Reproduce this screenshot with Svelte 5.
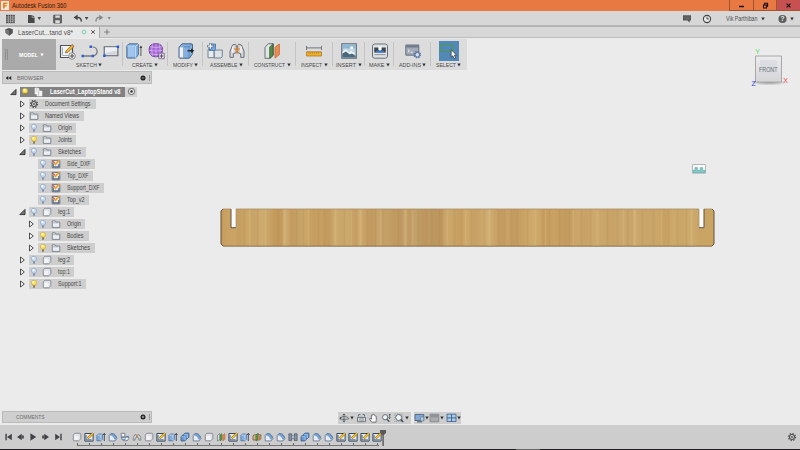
<script>
  const groups = [
    { name: 'SKETCH', w: 67, tw: 21, icons: ['sketchBig', 'line', 'rect'] },
    { name: 'CREATE', w: 45.5, tw: 20.5, icons: ['extrudeBig', 'form'] },
    { name: 'MODIFY', w: 35, tw: 20, icons: ['press'] },
    { name: 'ASSEMBLE', w: 46, tw: 27.5, icons: ['newcomp', 'jointBig'] },
    { name: 'CONSTRUCT', w: 46.5, tw: 31, icons: ['planesBig'] },
    { name: 'INSPECT', w: 37.5, tw: 21, icons: ['measure'] },
    { name: 'INSERT', w: 32, tw: 20, icons: ['photo'] },
    { name: 'MAKE', w: 29, tw: 15.5, icons: ['printer'] },
    { name: 'ADD-INS', w: 37, tw: 22, icons: ['addins'] },
    { name: 'SELECT', w: 35, tw: 20, icons: ['select'] }
  ];

  // d: nesting depth, a: arrow state, w: highlighted width, tw: text width
  const tree = [
    { t: 'Document Settings', d: 1, a: 'closed', icons: ['gear'], w: 67, tw: 45.5 },
    { t: 'Named Views', d: 1, a: 'closed', icons: ['folder'], w: 55, tw: 34 },
    { t: 'Origin', d: 1, a: 'closed', icons: ['bulb', 'folder'], w: 47, tw: 14 },
    { t: 'Joints', d: 1, a: 'closed', icons: ['bulbOn', 'folder'], w: 47, tw: 14 },
    { t: 'Sketches', d: 1, a: 'open', icons: ['bulb', 'folder'], w: 57, tw: 23 },
    { t: 'Side_DXF', d: 2, a: '', icons: ['bulb', 'dxf'], w: 57, tw: 23.5 },
    { t: 'Top_DXF', d: 2, a: '', icons: ['bulb', 'dxf'], w: 55, tw: 21.5 },
    { t: 'Support_DXF', d: 2, a: '', icons: ['bulb', 'dxf'], w: 65.5, tw: 32.5 },
    { t: 'Top_v2', d: 2, a: '', icons: ['bulb', 'dxf'], w: 51, tw: 17.5 },
    { t: 'leg:1', d: 1, a: 'open', icons: ['bulb', 'box'], w: 45, tw: 12 },
    { t: 'Origin', d: 2, a: 'closed', icons: ['bulb', 'folder'], w: 47, tw: 14 },
    { t: 'Bodies', d: 2, a: 'closed', icons: ['bulbOn', 'folder'], w: 51, tw: 16.5 },
    { t: 'Sketches', d: 2, a: 'closed', icons: ['bulbOn', 'folder'], w: 57, tw: 23 },
    { t: 'leg:2', d: 1, a: 'closed', icons: ['bulb', 'box'], w: 45, tw: 12 },
    { t: 'top:1', d: 1, a: 'closed', icons: ['bulb', 'box'], w: 45, tw: 12 },
    { t: 'Support:1', d: 1, a: 'closed', icons: ['bulbOn', 'box'], w: 57, tw: 23.5 }
  ];

  const history = [
    'box', 'sketch', 'extrude', 'fillet', 'revolve', 'joint', 'box', 'sketch', 'extrude',
    'combine', 'fillet', 'box', 'planes', 'sketch', 'extrude', 'split', 'fillet', 'fillet',
    'mirror', 'combine', 'fillet', 'fillet', 'sketch', 'sketch', 'sketch', 'sketch'
  ];

  // [offset along the board, colour]
  const grain = [
    [0, '#c59a5c'], [5, '#c9a163'], [14, '#cba466'], [17, '#c49d60'], [26, '#cba767'], [34, '#c9a469'],
    [41, '#ceab6f'], [48, '#c8a467'], [54, '#c49a5b'], [61, '#c39a5d'], [63, '#cdac72'], [67, '#cba66c'],
    [70, '#c39b60'], [78, '#c7a265'], [85, '#cba76a'], [92, '#c69e60'], [100, '#c89f63'], [108, '#c39a5d'],
    [114, '#cdab70'], [120, '#c8a568'], [127, '#cba86c'], [135, '#c49d62'], [139, '#cfad73'], [144, '#c6a064'],
    [151, '#c29960'], [158, '#c7a46b'], [166, '#c4a067'], [173, '#c19a61'], [181, '#bd9863'], [184, '#c8a970'],
    [188, '#bf9961'], [194, '#c2a16a'], [202, '#bd975f'], [208, '#c09861'], [214, '#bb965f'], [221, '#be965d'],
    [224, '#c9a66c'], [230, '#caa66a'], [238, '#c79f61'], [246, '#cda86a'], [254, '#c6a065'], [260, '#cba56a'],
    [268, '#d0ae75'], [274, '#c9a468'], [280, '#c49b5f'], [287, '#c8a267'], [293, '#c39a60'], [302, '#c9a265'],
    [312, '#cfaa6d'], [319, '#cba668'], [322, '#c59b5d'], [333, '#c8a163'], [345, '#c39a5e'], [356, '#cba56a'],
    [365, '#c8a266'], [374, '#cda96d'], [383, '#caa56a'], [392, '#c8a266'], [400, '#cba76d'], [412, '#c9a46b'],
    [413, '#d1af75'], [416, '#cba76b'], [426, '#c9a56a'], [436, '#cba569'], [444, '#c6a163'], [452, '#cda96c'],
    [461, '#c9a668'], [470, '#ceac6f'], [478, '#c8a466'], [486, '#c9a463'], [493, '#c9a463']
  ];
  const darkLines = [24, 37, 58, 76, 83, 98, 104, 124, 147, 155, 163, 178, 198, 206, 211, 219, 234, 241, 251, 264, 278, 284, 291, 297, 307, 329, 339, 349, 361, 370, 387, 397, 407, 422, 433, 448, 457, 466];
  const lightLines = [29, 45, 64, 88, 115, 131, 140, 160, 185, 192, 227, 245, 269, 315, 325, 353, 377, 403, 414, 441, 471];
</script>

{#snippet label(text, w, size = 6, color = '#555', weight = 400)}
  <svg class="label" width={w} height="8" viewBox="0 0 {w} 8">
    <text x="0" y={4 + size * 0.36} textLength={w} lengthAdjust="spacingAndGlyphs" font-size={size} fill={color} font-weight={weight}>{text}</text>
  </svg>
{/snippet}

{#snippet caret(color = '#333')}
  <svg class="label" width="4" height="4" viewBox="0 0 4 4"><path d="M.3 .6h3.4L2 3.4z" fill={color} /></svg>
{/snippet}

{#snippet arrow(kind)}
  <svg class="label" width="7" height="8" viewBox="0 0 7 8">
    {#if kind === 'closed'}
      <path d="M1.5 1v6M1.6 1l3.7 3-3.7 3" fill="#f4f4f4" stroke="#3c3c3c" stroke-width=".9" />
    {:else if kind === 'open'}
      <path d="M6 1.4v5.2H.8z" fill="#777" stroke="#2e2e2e" stroke-width=".9" />
    {/if}
  </svg>
{/snippet}

{#snippet small(name)}
  <svg class="small" width="10" height="10" viewBox="0 0 10 10">
    {#if name === 'bulb' || name === 'bulbOn'}
      <circle cx="5" cy="3.8" r="2.6" fill={name === 'bulb' ? '#cbdcf6' : '#ffe15a'} stroke={name === 'bulb' ? '#8aa3cd' : '#d0a838'} stroke-width=".7" />
      <path d="M4 6.3h2v2.5H4z" fill={name === 'bulb' ? '#8295b4' : '#8f8250'} />
      <circle cx="4.4" cy="3.1" r="1" fill="#fff" />
    {:else if name === 'folder'}
      <path d="M1.3 8.4V1.9h3l.7 1.2h3.8v5.3z" fill="#eceef1" stroke="#667080" stroke-width=".8" />
      <path d="M1.6 3.8h6.9" stroke="#98a0aa" stroke-width=".7" />
    {:else if name === 'gear'}
      <circle cx="5" cy="5" r="3.5" fill="none" stroke="#505050" stroke-width="1.3" stroke-dasharray="1.35 1.4" />
      <circle cx="5" cy="5" r="2.5" fill="#d3d3d3" stroke="#505050" stroke-width="1.1" />
      <circle cx="5" cy="5" r=".9" fill="#555" />
    {:else if name === 'box'}
      <path d="M1.3 3.2Q1.3 2.6 2 2.2L3 1.3h4.9q.9 0 .9.8v4.6L7.4 8.3Q7 8.8 6.4 8.8H2.2q-.9 0-.9-.8z" fill="#f2f3f6" stroke="#70757e" stroke-width=".8" />
      <path d="M2.2 3h4.5q.5 0 .5.5v4.4M7.2 3l1.2-1.2" fill="none" stroke="#b5bbc5" stroke-width=".5" />
    {:else if name === 'dxf'}
      <path d="M1.2 1.4h7.6v7.4H1.2z" fill="#e9e7df" stroke="#4a5a70" stroke-width=".8" />
      <path d="M2.2 8V4.4M7.8 8V5M2.2 7.9h5.6" fill="none" stroke="#415a7b" stroke-width="1" />
      <path d="M3.8 5.8 8.4 1" stroke="#eda02a" stroke-width="1.8" />
      <path d="M1.4 2l2.4 2.2" stroke="#d8573a" stroke-width="1.2" />
    {:else if name === 'sketch'}
      <path d="M.9 1.5h8.2v7.6H.9z" fill="#e7e9eb" stroke="#34475f" stroke-width="1" />
      <path d="M2 3v4.9h5.8" fill="none" stroke="#4c6484" stroke-width="1" />
      <path d="M3.8 6.3 9 1.2" stroke="#5b4a1e" stroke-width="2.3" />
      <path d="M4 6.1 9 1.2" stroke="#ffc628" stroke-width="1.6" />
    {:else if name === 'extrude'}
      <path d="M.9 3.1l1.5-1h4v5.3L5 8.8H.9z" fill="#84aede" stroke="#3c679c" stroke-width=".7" />
      <path d="M1 3.1h4v5.6M5 3.1l1.4-1" stroke="#d3e5fa" fill="none" stroke-width=".6" />
      <path d="M8.3 9V1.5M7.1 3l1.2-1.7L9.5 3" fill="none" stroke="#39424e" stroke-width=".9" />
    {:else if name === 'fillet'}
      <path d="M1.2 8.9V3.4l1.8-2q4.9-.2 5.9 5L7.1 8.9z" fill="#e8eef6" stroke="#5e6f87" stroke-width=".8" />
      <path d="M2 3Q5.7 3.2 6.9 7.4L8.6 6Q7.4 1.8 3.2 1.6z" fill="#7ba7dd" stroke="#45709f" stroke-width=".5" />
    {:else if name === 'revolve'}
      <path d="M1.2 1.3h3.6v3.5H1.2zM1.2 5.2q.2 3.7 4 3.7 3.5-.2 3.6-2.6V4.7H5.6v1.4z" fill="#f1f2f4" stroke="#606d7e" stroke-width=".8" />
      <path d="M2.2 7q1.3 1.3 3.3.6M6 5h2.7" stroke="#3978be" stroke-width="1" fill="none" />
    {:else if name === 'joint'}
      <path d="M1.2 8.2V5.7L3 2.5l1.7 1v2l-1.6.6v2zM8.8 8.2V5.7L7 2.5l-1.7 1v2l1.6.6v2z" fill="#d8dadc" stroke="#71767c" stroke-width=".8" />
      <path d="M5 2.1v3.4" stroke="#df8c47" stroke-width=".9" />
    {:else if name === 'combine'}
      <path d="M1 4.6 2.4 3.3h1.4V2.1l1.4-1h3.7v4.2L7.4 6.5H6.3v1.1L4.9 8.9H1z" fill="#6998d3" stroke="#2f5788" stroke-width=".8" />
      <path d="M1.4 4.8H5v3.5M4.2 2.4h3.2v3.7" fill="none" stroke="#bcd7f5" stroke-width=".6" />
    {:else if name === 'planes'}
      <path d="M1.5 3.3 3.9 1.5v5.9L1.5 9z" fill="#dcdfe1" stroke="#56616c" stroke-width=".6" />
      <path d="M4 3.2 6 1.6v5.9L4 9z" fill="#5b9a48" stroke="#3b6b2f" stroke-width=".5" />
      <path d="M6.8 3.2 9 1.6v5.7L6.8 9z" fill="#ea8549" stroke="#b86336" stroke-width=".5" />
    {:else if name === 'split'}
      <path d="M1 3.8 2.5 2.7h6.4v4.1L7.5 8H1z" fill="#d7b082" stroke="#735a41" stroke-width=".8" />
      <path d="M4 3.2 6 1.2v6L4 9.1z" fill="#62a151" stroke="#376a2c" stroke-width=".7" />
      <path d="M7.4 3.8V8" stroke="#e0683b" stroke-width="1" />
    {:else if name === 'mirror'}
      <path d="M.9 1.8h2.7v6.8H.9zM6.4 1.8h2.7v6.8H6.4z" fill="#8495ab" stroke="#454f5d" stroke-width=".7" />
      <path d="M3.7 3.5h2.6v3.2H3.7z" fill="#c0c9d5" stroke="#5c6775" stroke-width=".6" />
    {/if}
  </svg>
{/snippet}

{#snippet big(name)}
  <svg class="big" width={name === 'select' ? 20 : 18} height={name === 'select' ? 20 : 18} viewBox={name === 'select' ? '0 0 20 20' : '0 0 18 18'}>
    {#if name === 'sketchBig'}
      <path d="M2.5 3.5h12v12h-12z" fill="#f2f4f6" stroke="#4e535b" stroke-width="1.2" />
      <path d="M4.5 5.5v8h6" fill="none" stroke="#a3adb9" />
      <path d="M7.5 10.8 8 8.9 14.1 2.6l1.9 1.8-6.2 6.2z" fill="#f5b82d" stroke="#6e5220" stroke-width=".7" />
      <path d="M13.6 3.1l1.8 1.8" stroke="#db6e5d" stroke-width="1" />
      <circle cx="14" cy="14" r="3.3" fill="#e3e3e3" stroke="#666" stroke-width=".7" />
      <path d="M14 12v4M12 14h4" stroke="#555" stroke-width="1" />
    {:else if name === 'line'}
      <path d="M2 14h8.5a4.6 4.6 0 0 0 0-9.2" fill="none" stroke="#737980" stroke-width="1.3" transform="translate(2 0)" />
      <path d="M1.5 12.8H4v2.4H1.5zM11.5 12.8H14v2.4h-2.5zM9.5 3.5H12v2.6H9.5z" fill="#2f5fd0" />
    {:else if name === 'rect'}
      <path d="M2.2 4.8h13.7v9H2.2z" fill="#d5d8df" stroke="#5e6672" stroke-width="1.1" />
      <path d="M3 5.5h12v3L3 11z" fill="#edf0f4" />
      <path d="M1.2 12.6h2.4V15H1.2zM14.7 3.6h2.4V6h-2.4z" fill="#2559cf" />
    {:else if name === 'extrudeBig'}
      <path d="M1.8 4.3Q1.8 3.7 2.5 3.2l1.4-1.4h8.5q1 0 1 .9v10.1L11 15.6q-.5.5-1.2.5H2.8q-1 0-1-.9z" fill="#7fb0e5" stroke="#4a6685" stroke-width=".9" />
      <path d="M2.4 4.2h7.4q.8 0 .8.8v10.6M10.6 4.4l2.3-2" fill="none" stroke="#cce2fa" stroke-width=".9" />
      <path d="M3 5h6.5v9.8H3z" fill="#a0c5ed" />
      <path d="M15.9 14V4.7" stroke="#4c4c4c" stroke-width=".9" /><path d="M14.6 6l1.3-2.5L17.2 6z" fill="#333" />
    {:else if name === 'form'}
      <path d="M5 2.3q4-1.4 7.8 0 2.8 1.3 2.8 5.4t-2.8 6.3q-4 1.8-7.8 0-3-2-3-6.2t3-5.5z" fill="#a567d6" stroke="#68418d" stroke-width=".9" />
      <path d="M5.5 2.1q-1.7 6 0 12M9 1.6v13.3M12.4 2.2q1.5 6 0 12M2.9 4.8q6 1.7 12 0M2 8.3q7 1.5 13.5 0M3 11.8q6 1.6 12 0" fill="none" stroke="#e3c5f7" stroke-width=".6" />
      <path d="M11.8 11.2h5.5v5.5h-5.5z" fill="#e5ddec" stroke="#634b75" stroke-width=".7" />
      <path d="M14.5 12.3v3.5M12.8 14h3.5" stroke="#4a3b58" stroke-width=".9" />
    {:else if name === 'press'}
      <path d="M2 5.2l3.1-3.4h9.4q1 0 1 1v9l-3.2 4.4H3q-1 0-1-1z" fill="#85b1df" stroke="#456585" stroke-width="1" />
      <path d="M2.5 5h4v10.7h-4z" fill="#ecf2f8" stroke="#7890aa" stroke-width=".6" />
      <path d="M7 4.8h5v11M12 4.8l3-2.8" fill="none" stroke="#3c78b3" stroke-width=".7" />
      <path d="M10.5 8.8h5" stroke="#222" stroke-width="1.4" /><path d="M14 6.6l3.4 2.2L14 11z" fill="#222" />
    {:else if name === 'newcomp'}
      <path d="M2 7.8 3.3 6.5h4.8v9.2H2z" fill="#e9ecf0" stroke="#667688" stroke-width=".9" />
      <path d="M8.3 9.3l1.2-1.3h6.8v6.4L15 16H8.3z" fill="#dde3ea" stroke="#667688" stroke-width=".9" />
      <path d="M3 3.4 4.3 2h5.2v5.2L8.3 8.5H3z" fill="#72a8e0" stroke="#426f9f" stroke-width=".8" />
      <path d="M4.3 1v6.4M1.1 4.2h6.4" stroke="#4b5e73" stroke-width="2.2" /><path d="M4.3 1.6v5.2M1.7 4.2h5.2" stroke="#fff" stroke-width="1.2" />
    {:else if name === 'jointBig'}
      <path d="M2 15.4V9.2L4.5 3l2.8-.8 1 1.2v7.2l-3 1.1v3.7zM16 15.4V9.2L13.5 3l-2.8-.8-1 1.2v7.2l3 1.1v3.7z" fill="#d4d7da" stroke="#6b7076" stroke-width="1" />
      <path d="M4.8 4.5v6M13.1 4.5v6" stroke="#f6f7f8" stroke-width="1.3" />
      <path d="M9 4.2v8" stroke="#dd7c2a" stroke-width="1" /><path d="M6.2 6.4 9 8.6l2.8-2.2" stroke="#e68a38" stroke-width="1.3" fill="none" />
    {:else if name === 'planesBig'}
      <path d="M2 5.3l3.4-3.6h5v11.5L7.2 16.3H2z" fill="#e2e6e8" stroke="#59646b" stroke-width=".9" />
      <path d="M6.7 5 10 1.9v11.4l-3.3 3z" fill="#568c45" stroke="#3b6133" stroke-width=".8" />
      <path d="M12 5.3l4.3-3.4v10.7L12 16.1z" fill="#ee8b51" stroke="#c76b38" stroke-width=".9" />
    {:else if name === 'measure'}
      <path d="M1.5 3.9v4M16.5 3.9v4M2 5.9h14" stroke="#6e757e" stroke-width="1" />
      <path d="M1.5 9.8h15V14h-15z" fill="#efaf27" stroke="#a87b29" stroke-width=".8" />
      <path d="M3.5 10v1.6M5.5 10v1.6M7.5 10v1.6M9.5 10v1.6M11.5 10v1.6M13.5 10v1.6" stroke="#97712e" stroke-width=".5" />
    {:else if name === 'photo'}
      <path d="M1.8 1.8h14.5v14.4H1.8z" fill="#bdd6e5" stroke="#5e666f" stroke-width="1.1" />
      <path d="M2.5 2.5h13v4h-13z" fill="#8fb8d3" /><circle cx="11.7" cy="5.8" r="1.5" fill="#fff" />
      <path d="M2.4 12V10l3.6-3 3.2 3.6 2-1.8 4.4 3.2z" fill="#eef3f5" />
      <path d="M2.4 15.6v-4l3.6-2.1 3.8 3 2-1 3.8 2.5v1.6z" fill="#4c687c" />
    {:else if name === 'printer'}
      <rect x="1.5" y="2" width="15" height="14.2" rx="2.2" fill="#dfe3e6" stroke="#6b7177" stroke-width="1" />
      <path d="M3.2 5.5h11.6v5H3.2z" fill="#40464f" /><path d="M7.4 4.8h3.2v3L9 9.5 7.4 7.8z" fill="#fff" />
      <path d="M4.5 10.6q0-2.2 2.2-2.2h4.6q2.2 0 2.2 2.2z" fill="#397bc7" /><path d="M3.3 12.6h11.4" stroke="#999" stroke-width="1.1" />
    {:else if name === 'addins'}
      <path d="M1.8 3h13v10.2h-13z" fill="#a3aab8" stroke="#69717f" stroke-width="1" /><path d="M2 3.2h12.6v2.3H2z" fill="#727b8b" />
      <path d="M4 7.6l1.4 1.3L4 10.1M6.7 10.2h2" stroke="#fff" stroke-width=".8" fill="none" />
      <circle cx="13.3" cy="12.7" r="3.1" fill="none" stroke="#59749d" stroke-width="1.4" stroke-dasharray="1.4 1.03" />
      <circle cx="13.3" cy="12.7" r="2.3" fill="#d4e0ef" stroke="#6683ad" stroke-width="1.2" />
    {:else if name === 'select'}
      <path d="M0 0h20v20H0z" fill="#5288b5" /><path d="M2.5 3.5h11v7h-11z" fill="none" stroke="#4b9a4b" stroke-width="1" />
      <path d="M12.2 8.8v7.5l1.7-1.5 1.3 2.8 1.5-.7-1.3-2.8 2.1-.2z" fill="#fff" stroke="#2b3138" stroke-width=".7" />
    {/if}
  </svg>
{/snippet}

{#snippet tool(name)}
  <svg class="small" width="11" height="10" viewBox="0 0 11 10">
    {#if name === 'orbit'}
      <path d="M5 1v8M3.7 2.5 5 .8l1.3 1.7M3.7 7.5 5 9.2l1.3-1.7M1.6 5q0-1.4 3.4-1.4T9.6 5 5 6.4 1.6 5z" fill="none" stroke="#555b62" stroke-width=".8" />
      <path d="M.8 3.8v2.6L2.8 5z" fill="#454b52" />
    {:else if name === 'look'}
      <path d="M1.5 4.4h8v4.3h-8z" fill="#dfe2e5" stroke="#606973" stroke-width=".9" /><path d="M2.5 3.5V1.6h2M8.5 3.5V1.6h-2" fill="none" stroke="#606973" stroke-width=".9" />
      <path d="M3.6 5.7h3.8v1.6H3.6z" fill="none" stroke="#6e7781" stroke-width=".6" />
    {:else if name === 'pan'}
      <path d="M3.8 9.2 1.3 6 2 5.2l1.4 1V2.3q.7-.7 1.1 0l.2-.9q.7-.6 1.1 0l.3.8q.7-.5 1 .2l.2.8q.7-.4 1 .2v3.4L8 9.2z" fill="#f8f8f8" stroke="#565b61" stroke-width=".8" />
    {:else if name === 'zoom'}
      <circle cx="4.1" cy="4.2" r="2.6" fill="#edf2f6" stroke="#5c656f" stroke-width=".9" /><path d="M5.9 6.1l2.5 2.7" stroke="#464d55" stroke-width="1.3" /><path d="M8.6 1v4.5M7.6 2.2 8.6 1l1 1.2M7.6 4.3l1 1.2 1-1.2" fill="none" stroke="#454c54" stroke-width=".7" />
    {:else if name === 'fit'}
      <path d="M.8 1h7.5v7.5H.8z" fill="none" stroke="#777f88" stroke-width=".6" stroke-dasharray="1 1" /><circle cx="4.7" cy="4.5" r="3" fill="#f4f7f9" stroke="#596069" stroke-width=".9" /><path d="M6.9 6.6 9.3 9" stroke="#46505b" stroke-width="1.5" />
    {:else if name === 'display'}
      <path d="M1 1.5h8.8v6H1z" fill="#81a9d2" stroke="#526781" stroke-width=".9" /><path d="M3 8.8h5" stroke="#5b636c" stroke-width="1.2" /><path d="M6.5 4h3.3v4H6.5z" fill="#b4cbe2" stroke="#5a718b" stroke-width=".6" />
    {:else if name === 'shade'}
      <path d="M1 1.2h8.8v7.6H1z" fill="#a9abad" stroke="#777b82" stroke-width=".7" /><path d="M1.3 1.5h8.2v2.8H1.3z" fill="#8c9097" />
    {:else}
      <path d="M1 1.2h9v7.3H1z" fill="#a9cbec" stroke="#48698f" stroke-width=".9" /><path d="M5.5 1.2v7.3M1 4.9h9" stroke="#48698f" stroke-width="1" />
    {/if}
  </svg>
{/snippet}

<div class="app">
  <header class="title">
    <svg class="logo" width="8" height="9" viewBox="0 0 8 9"><path d="M0 0h8v9H0z" fill="#f4eadb" /><path d="M2 7.6V1.5h4.4v1.6H3.8V4h2v1.5h-2v2.1z" fill="#e98426" /></svg>
    {@render label('Autodesk Fusion 360', 54.5, 6.6, '#281b13')}
    <div class="window">
      <span class="min"><svg width="7" height="7" viewBox="0 0 7 7"><path d="M1 4.5h5" stroke="#1b120c" stroke-width="1.5" /></svg></span>
      <span class="max"><svg width="7" height="7" viewBox="0 0 7 7"><path d="M1.5 3h3v3h-3zM2.6 2.5V1.2h3v3h-.8" fill="none" stroke="#1b120c" stroke-width="1.1" /></svg></span>
      <span class="close"><svg width="7" height="7" viewBox="0 0 7 7"><path d="M1.6 1.6l3.8 3.8M5.4 1.6 1.6 5.4" stroke="#1b120c" stroke-width="1.3" /></svg></span>
    </div>
  </header>

  <div class="quick">
    <svg width="112" height="14" viewBox="0 0 112 14">
      <path d="M6 3.8h8.8v8.4H6z" fill="#4a4a4a" /><path d="M8.3 3.5v9M10.6 3.5v9M12.8 3.5v9M5.7 6h9.4M5.7 8.1h9.4M5.7 10.2h9.4" stroke="#d6d6d6" stroke-width=".55" />
      <path d="M28 4h3.8v2.4h2.8V12H28zM32.4 3.9l2.2 2h-2.2zM37.5 6h3.6l-1.8 3z" fill="#484848" />
      <path d="M53.7 4.2h7.7V12h-7.7z" fill="#626262" stroke="#4c4c4c" stroke-width=".8" /><path d="M55.3 4.5h4.5v2.3h-4.5zM55.3 9.2h4.5V12h-4.5z" fill="#dcdcdc" />
      <path d="M77 6.5q4-.6 4.4 4" fill="none" stroke="#444" stroke-width="1.5" /><path d="M77.6 3.6v5.7l-4-2.8zM84.8 6h3.6l-1.8 3z" fill="#444" />
      <path d="M99.5 6.5q-3.5-.6-3.5 4" fill="none" stroke="#8c8c8c" stroke-width="1.4" /><path d="M99.2 3.8v5.5l4-2.8zM107.6 6h3.2l-1.6 2.8z" fill="#858585" />
    </svg>
    <div class="account">
      <svg width="10" height="10" viewBox="0 0 10 10"><path d="M1 1.3h8v5.3H7.7v2.2L5.5 6.6H1z" fill="#555" /><path d="M2.3 3.2h5.3M2.3 4.8h5.3" stroke="#888" stroke-width=".5" /></svg>
      <svg class="clock" width="10" height="10" viewBox="0 0 10 10"><circle cx="5" cy="5" r="3.6" fill="#e5e5e5" stroke="#444" stroke-width="1.1" /><path d="M5 2.7V5h2" fill="none" stroke="#444" stroke-width=".9" /></svg>
      {@render label('Vik Parthiban', 31.5, 6.5, '#4f4f4f')}
      <span class="drop">{@render caret()}</span>
      <svg class="help" width="9" height="10" viewBox="0 0 9 10"><circle cx="4.5" cy="5" r="4.1" fill="#5e5e5e" /><text x="4.5" y="7.4" text-anchor="middle" font-size="6.5" font-weight="700" fill="#eee">?</text></svg>
      {@render caret()}
    </div>
  </div>

  <div class="tabs">
    <div class="tab">
      <svg width="10" height="10" viewBox="0 0 10 10"><path d="M1.4 2.2 5 1l3.8 1.2v3.9L5.3 8.7 1.4 5.8z" fill="#535353" /><path d="M1.8 2.5 5 3.5v4.4L1.8 5.6z" fill="#777" /></svg>
      <span class="name">{@render label('LaserCut...tand v8*', 55, 6.7, '#505050')}</span>
      <svg width="6" height="8" viewBox="0 0 6 8"><circle cx="3" cy="4" r="1.9" fill="none" stroke="#74c9aa" stroke-width=".9" /></svg>
      <svg class="x" width="6" height="8" viewBox="0 0 6 8"><path d="M1.2 2.2l3.6 3.6M4.8 2.2 1.2 5.8" stroke="#555" stroke-width="1" /></svg>
    </div>
    <svg class="plus" width="8" height="8" viewBox="0 0 8 8"><path d="M4 1.3v5.4M1.3 4h5.4" stroke="#777" stroke-width=".9" /></svg>
  </div>

  <main>
    <div class="ribbon">
      <div class="model">
        <i></i>
        {@render label('MODEL', 19, 6, '#fff', 700)}
        {@render caret('#fff')}
      </div>
      {#each groups as g}
        <section style="width:{g.w}px">
          <div class="icons">{#each g.icons as n}{@render big(n)}{/each}</div>
          <div class="caption">{@render label(g.name, g.tw, 6.2, '#484848')}{@render caret()}</div>
        </section>
      {/each}
    </div>

    <div class="panel browser">
      <svg width="7" height="6" viewBox="0 0 7 6"><path d="M3.3 1.1v3.8L.7 3zM6.2 1.1v3.8L3.6 3z" fill="#222" /></svg>
      {@render label('BROWSER', 26.5, 6.2, '#6c6c6c')}
      <svg class="dot" width="6" height="6" viewBox="0 0 6 6"><circle cx="3" cy="3" r="2.5" fill="#222" /><path d="M1.7 3h2.6" stroke="#aaa" stroke-width=".8" /></svg>
      <i></i>
    </div>

    <div class="tree">
      <div class="row root">
        {@render arrow('open')}
        <div class="item">
          {@render small('bulbOn')}
          <svg class="doc" width="10" height="10" viewBox="0 0 10 10"><path d="M2 1h3l1 1v2h3v5H4V7H2z" fill="#f4f4f4" stroke="#eee" stroke-width=".6" /><path d="M5.6 4.2v4.5M3.8 1v3.5" stroke="#999" stroke-width=".5" /></svg>
          {@render label('LaserCut_LaptopStand v8', 70.5, 6.4, '#fff', 700)}
        </div>
        <div class="radio"><svg width="9" height="9" viewBox="0 0 9 9"><circle cx="4.5" cy="4.5" r="3.1" fill="#f2f2f2" stroke="#444" stroke-width=".8" /><circle cx="4.5" cy="4.5" r="1.2" fill="#222" /></svg></div>
      </div>
      {#each tree as n}
        <div class="row" class:deep={n.d === 2}>
          {@render arrow(n.a)}
          <div class="item" style="width:{n.w}px">
            {#each n.icons as name}<span class="cell">{@render small(name)}</span>{/each}
            <span class="text">{@render label(n.t, n.tw, 6.5, '#484848')}</span>
          </div>
        </div>
      {/each}
    </div>

    <svg class="board" width="495" height="40" viewBox="0 0 495 40">
      <defs>
        <linearGradient id="wood" gradientUnits="userSpaceOnUse" x1="1" x2="494" y1="0" y2="0">
          {#each grain as [x, c]}<stop offset={x / 493} stop-color={c} />{/each}
        </linearGradient>
      </defs>
      <path d="M3 1h8v19h5V1h463v19h5V1h8l2 2v33l-2 2H3l-2-2V3z" fill="url(#wood)" />
      {#each darkLines as x}<path d="M{x + 0.5} 1.5V38" stroke="#a77c42" stroke-opacity=".16" stroke-width="1.6" />{/each}
      {#each lightLines as x}<path d="M{x + 0.5} 1.5V38" stroke="#e3cb92" stroke-opacity=".22" stroke-width="1.6" />{/each}
      <path d="M3 1h8M16 1h463M484 1h8" stroke="#a98d62" stroke-width=".8" />
      <path d="M3 38.2h489" stroke="#7d6542" stroke-width=".9" />
      <path d="M3 1 1 3v33l2 2M492 1l2 2v33l-2 2" fill="none" stroke="#63523c" stroke-width="1" />
      <path d="M11 1h5v18.5h-5zM479 1h5v18.5h-5z" fill="#fafafa" />
      <path d="M11 1v18.7h5M479 19.7h5V1" fill="none" stroke="#5e513f" stroke-width="1" />
      <path d="M16 1v18M479 1v18" stroke="#a28d6d" stroke-width=".7" />
    </svg>

    <svg class="glyph" width="14" height="10" viewBox="0 0 14 10">
      <path d="M.5 .5h13v8.6H.5z" fill="#fafafa" stroke="#a9b0b0" stroke-width=".9" />
      <path d="M1 8.7V6.3h2V3.6h2.4v2.7h2.8V3.6h2.4v2.7H13v2.4z" fill="#82cbc9" stroke="#4f9c9c" stroke-width=".5" />
    </svg>

    <svg class="cube" width="42" height="44" viewBox="0 0 42 44">
      <defs>
        <linearGradient id="face" x1="0" y1="0" x2="0" y2="1"><stop offset="0" stop-color="#ececee" /><stop offset="1" stop-color="#d5d5d7" /></linearGradient>
        <radialGradient id="shade"><stop offset="0" stop-color="#999" /><stop offset="1" stop-color="#999" stop-opacity="0" /></radialGradient>
      </defs>
      <ellipse cx="19" cy="36.5" rx="19" ry="3" fill="url(#shade)" />
      <path d="M5.5 10h26v26h-26z" fill="url(#face)" stroke="#a8a8aa" stroke-width="1" />
      <path d="M10 14h17v16H10z" fill="#d7dae0" opacity=".7" />
      <text x="9" y="26" textLength="18.5" lengthAdjust="spacingAndGlyphs" font-size="7.8" fill="#6b6f76">FRONT</text>
      <text x="5.2" y="8.3" font-size="7" fill="#4fe04f">Y</text>
      <text x="33.3" y="36.8" font-size="7" fill="#f0504c">X</text>
      <text x="1.5" y="40" font-size="7" fill="#3a3be6">Z</text>
    </svg>

    <footer>
      <div class="panel comments">
        {@render label('COMMENTS', 28.5, 6.2, '#6c6c6c')}
        <svg class="dot" width="6" height="6" viewBox="0 0 6 6"><circle cx="3" cy="3" r="2.5" fill="#222" /><path d="M1.8 3h2.4M3 1.8v2.4" stroke="#ccc" stroke-width=".7" /></svg>
        <i></i>
      </div>
      <div class="nav">
        {@render tool('orbit')}{@render caret()}
        <span></span>{@render tool('look')}<span></span>{@render tool('pan')}<span></span>{@render tool('zoom')}<span></span>{@render tool('fit')}{@render caret()}
      </div>
      <div class="nav view">
        {@render tool('display')}{@render caret()}{@render tool('shade')}{@render caret()}<span></span>{@render tool('grid')}{@render caret()}
      </div>
    </footer>
  </main>

  <div class="timeline">
    <svg class="play" width="72" height="12" viewBox="0 0 72 12">
      <path d="M5.4 2.8h1.4v6.4H5.4zM11.8 2.8v6.4L7 6zM21.8 2.8v6.4L17 6zM22.1 4.4h1.7v3.2h-1.7zM30.4 2.2v7.6L36.2 6zM44.2 2.8v6.4L49 6zM42.2 4.4h1.7v3.2h-1.7zM55.2 2.8v6.4L60 6zM60.3 2.8h1.4v6.4h-1.4z" fill="#3f4246" />
    </svg>
    <div class="history">
      {#each history as name}<span>{@render small(name)}<i></i></span>{/each}
      <svg class="marker" width="8" height="18" viewBox="0 0 8 18"><path d="M1 1h6v3L4.8 6v11H3.4V6L1 4z" fill="#595959" /></svg>
    </div>
    <div class="settings">{@render small('gear')}</div>
  </div>
  <div class="taskbar"><i></i></div>
</div>

<style>
  :global(body) { margin: 0; overflow: hidden; }
  .app { width: 800px; height: 450px; display: flex; flex-direction: column; background: #ebebeb; font-family: "Liberation Sans", Arial, sans-serif; overflow: hidden; }
  svg { display: block; flex: none; overflow: visible; }
  .title { height: 11px; flex: none; display: flex; align-items: center; background: #e97942; }
  .logo { margin: 0 3px 0 1px; }
  .window { margin-left: auto; display: flex; height: 11px; }
  .window span { display: flex; align-items: center; justify-content: center; box-sizing: border-box; border-left: 1px solid #a15330; border-bottom: 1px solid #a15330; }
  .min { width: 24px; }
  .max { width: 23px; }
  .close { width: 24px; background: #c75050; }
  .quick { height: 14px; flex: none; display: flex; justify-content: space-between; background: #d7d7d7; border-bottom: 2px solid #b4b4b4; }
  .quick > svg { margin-top: -.4px; }
  .account { display: flex; align-items: center; padding: 1px 6px 0 0; }
  .clock { margin: 0 14px 0 10px; }
  .drop { margin: 0 13px 0 4px; }
  .help { margin-right: 3px; }
  .tabs { height: 10px; flex: none; display: flex; align-items: center; background: #d7d7d7; border-bottom: 1px solid #bdbdbd; }
  .tab { width: 95px; height: 11px; padding-left: 4px; display: flex; align-items: center; background: #e9e9e9; border-right: 1px solid #aaa; }
  .name { margin: 0 8px 0 4px; padding-top: 1px; }
  .x { margin-left: 3px; }
  .plus { margin-left: 3px; }
  main { height: 387px; flex: none; position: relative; display: flex; flex-direction: column; }
  .ribbon { height: 31px; margin: 1px 0 0 2px; width: 465px; display: flex; background: #dcdcdc; }
  .model { width: 53.5px; display: flex; align-items: center; background: #aaa; gap: 2.5px; }
  .model i { width: 1px; height: 11px; margin: 0 8px 0 3px; border-left: 1px solid #8e8e8e; border-right: 1px solid #8e8e8e; }
  section { box-sizing: border-box; flex: none; display: flex; flex-direction: column; align-items: center; background: linear-gradient(#c4c4c4, #c4c4c4) right 3px / 1px 24px no-repeat; }
  section:last-child { background: none; }
  .icons { height: 21px; display: flex; align-items: center; gap: 4px; padding-top: 1px; }
  .caption { display: flex; align-items: center; gap: 1.5px; }
  .panel { box-sizing: border-box; width: 150px; height: 12px; margin-left: 2px; display: flex; align-items: center; background: #cfcfcf; border: 1px solid #bababa; }
  .panel i { width: 1px; height: 6px; margin: 0 1px 0 3px; background: #999; }
  .dot { margin-left: auto; }
  .browser { margin-top: 1px; padding-left: 1.5px; gap: 5px; height: 13px; }
  .browser i { margin-left: -2px; }
  .tree { padding-top: 1.5px; }
  .row { height: 12px; padding-left: 19px; display: flex; align-items: center; }
  .row.deep { padding-left: 28px; }
  .row.root { padding-left: 10px; }
  .item { height: 10px; margin-left: 3px; display: flex; align-items: center; background: #cecece; }
  .root .item { width: 105px; background: #828282; }
  .doc { margin: 0 7px 0 3px; }
  .radio { width: 12px; height: 10px; display: flex; align-items: center; justify-content: center; background: #d2d2d2; }
  .cell { width: 13px; }
  .text { margin-left: 3px; }
  .board { position: absolute; left: 220px; top: 170px; }
  .glyph { position: absolute; left: 692px; top: 126px; }
  .cube { position: absolute; left: 750px; top: 8px; }
  footer { margin-top: auto; height: 15px; display: flex; align-items: center; }
  .comments { padding-left: 12.5px; margin-top: -1px; }
  .nav { box-sizing: border-box; height: 12px; margin-left: 186px; width: 72.5px; padding-left: 1px; display: flex; align-items: center; background: #cecece; }
  .nav span { width: 1.7px; }
  .nav.view { margin-left: 3.5px; width: 46.5px; padding-left: 0; }
  .timeline { height: 23.5px; flex: none; display: flex; background: #cdcdcd; }
  .play { margin-top: 6px; }
  .history { display: flex; position: relative; width: 314px; background: linear-gradient(#777, #777) 5px 19.5px / 302px 1px no-repeat; }
  .history span { width: 12px; padding-top: 7px; display: flex; flex-direction: column; }
  .history span i { width: 1px; height: 2px; margin: 1px 0 0 5px; background: #666; }
  .marker { position: absolute; left: 307px; top: 4px; }
  .settings { margin: 7px 3.5px 0 auto; }
  .taskbar { height: 2px; background: #1f1d20; }
  .taskbar i { display: block; width: 24px; height: 1px; margin-left: 516px; background: #666; }
</style>
